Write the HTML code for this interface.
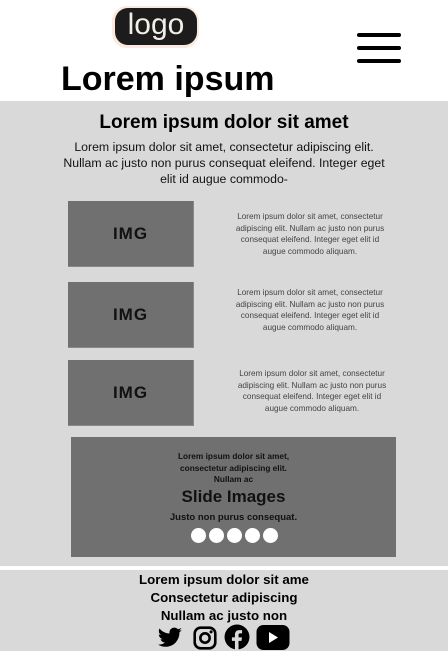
<!DOCTYPE html>
<html><head><meta charset="utf-8"><style>
*{margin:0;padding:0;box-sizing:border-box}
body{width:448px;height:651px;position:relative;background:#fff;font-family:"Liberation Sans",sans-serif;overflow:hidden;color:#000}
.a{position:absolute}
.c{text-align:center}
.img{position:absolute;left:68px;width:126px;height:66px;background:#707070;border-right:1px solid #888;border-bottom:1px solid #888;font-weight:bold;font-size:17px;line-height:66px;text-align:center;color:#111;letter-spacing:1px}
.sm{position:absolute;left:233px;width:154px;font-size:8.2px;line-height:11.5px;text-align:center;color:#444}
.dot{display:inline-block;width:15px;height:15px;border-radius:50%;background:#fff;margin:0 1.5px}
</style></head><body>
<div class="a" style="left:112px;top:6px;width:87px;height:42px;border-radius:15px;background:#fbe9df"></div>
<div class="a c" style="left:115px;top:8px;width:82px;height:37px;border-radius:13px;background:#1c1c1c;color:#f3efe8;font-size:30px;line-height:33px">logo</div>
<div class="a" style="left:357px;top:33px;width:44px;height:4px;background:#000;border-radius:2px"></div>
<div class="a" style="left:357px;top:46px;width:44px;height:4px;background:#000;border-radius:2px"></div>
<div class="a" style="left:357px;top:59px;width:44px;height:4px;background:#000;border-radius:2px"></div>
<div class="a" style="left:61px;top:59px;font-size:34px;font-weight:bold;line-height:40px">Lorem ipsum</div>
<div class="a" style="left:0;top:101px;width:448px;height:465px;background:#d9d9d9"></div>
<div class="a" style="left:0;top:570px;width:448px;height:81px;background:#d9d9d9"></div>
<div class="a c" style="left:0;top:111px;width:448px;font-size:19px;font-weight:bold;line-height:24px">Lorem ipsum dolor sit amet</div>
<div class="a c" style="left:60px;top:139px;width:328px;font-size:12.3px;line-height:16px;color:#111">Lorem ipsum dolor sit amet, consectetur adipiscing elit. Nullam ac justo non purus consequat eleifend. Integer eget elit id augue commodo-</div>
<div class="img" style="top:201px">IMG</div>
<div class="sm" style="top:211px">Lorem ipsum dolor sit amet, consectetur adipiscing elit. Nullam ac justo non purus consequat eleifend. Integer eget elit id augue commodo aliquam.</div>
<div class="img" style="top:282px">IMG</div>
<div class="sm" style="top:287px">Lorem ipsum dolor sit amet, consectetur adipiscing elit. Nullam ac justo non purus consequat eleifend. Integer eget elit id augue commodo aliquam.</div>
<div class="img" style="top:360px">IMG</div>
<div class="sm" style="top:368px;left:235px">Lorem ipsum dolor sit amet, consectetur adipiscing elit. Nullam ac justo non purus consequat eleifend. Integer eget elit id augue commodo aliquam.</div>
<div class="a" style="left:71px;top:437px;width:325px;height:120px;background:#707070"></div>
<div class="a c" style="left:71px;top:451px;width:325px;font-size:8.3px;font-weight:bold;line-height:11.5px;color:#111">Lorem ipsum dolor sit amet,<br>consectetur adipiscing elit.<br>Nullam ac</div>
<div class="a c" style="left:71px;top:486px;width:325px;font-size:17px;font-weight:bold;line-height:22px;color:#111">Slide Images</div>
<div class="a c" style="left:71px;top:512px;width:325px;font-size:9.5px;font-weight:bold;line-height:12px;color:#111">Justo non purus consequat.</div>
<div class="a c" style="left:71px;top:528px;width:325px;line-height:15px;padding-left:2px"><span class="dot"></span><span class="dot"></span><span class="dot"></span><span class="dot"></span><span class="dot"></span></div>
<div class="a c" style="left:0;top:571px;width:448px;font-size:13.3px;font-weight:bold;line-height:18px">Lorem ipsum dolor sit ame<br>Consectetur adipiscing<br>Nullam ac justo non</div>
<svg class="a" style="left:157px;top:625px" width="26" height="26" viewBox="0 0 24 24"><path fill="#000" d="M23 4.6c-.8.4-1.7.6-2.6.7.9-.6 1.6-1.4 2-2.5-.9.5-1.9.9-2.9 1.1C18.6 3 17.4 2.4 16 2.4c-2.5 0-4.5 2-4.5 4.5 0 .4 0 .7.1 1C7.8 7.7 4.5 5.9 2.3 3.2c-.4.7-.6 1.4-.6 2.3 0 1.6.8 2.9 2 3.7-.7 0-1.4-.2-2-.6 0 2.200 1.6 4 3.6 4.4-.7.2-1.4.2-2 .1.6 1.8 2.200 3.1 4.2 3.1-1.5 1.2-3.5 1.9-5.6 1.9H1c2 1.3 4.4 2 6.9 2 8.3 0 12.8-6.9 12.8-12.8v-.6c.9-.6 1.7-1.4 2.3-2.3z"/></svg>
<svg class="a" style="left:192px;top:625px" width="26" height="26" viewBox="0 0 24 24"><rect x="2.5" y="2.5" width="19" height="19" rx="5.5" fill="none" stroke="#000" stroke-width="2.4"/><circle cx="12" cy="12" r="4.3" fill="none" stroke="#000" stroke-width="2.4"/><circle cx="17.6" cy="6.4" r="1.4"/></svg>
<svg class="a" style="left:224px;top:624px" width="26" height="26" viewBox="0 0 24 24"><circle cx="12" cy="12" r="11.5"/><path fill="#d9d9d9" d="M13.4 24v-8.4h2.8l.4-3.3h-3.2v-2.1c0-.9.3-1.6 1.6-1.6h1.7V5.7c-.3 0-1.3-.1-2.5-.1-2.500 0-4.1 1.5-4.1 4.2v2.5H7.3v3.3h2.8V24z"/></svg>
<svg class="a" style="left:256px;top:624px" width="34" height="27" viewBox="0 0 34 27"><rect x="0.5" y="1" width="33" height="25" rx="7"/><path fill="#fff" d="M13 8v11l9-5.5z"/></svg>
</body></html>
